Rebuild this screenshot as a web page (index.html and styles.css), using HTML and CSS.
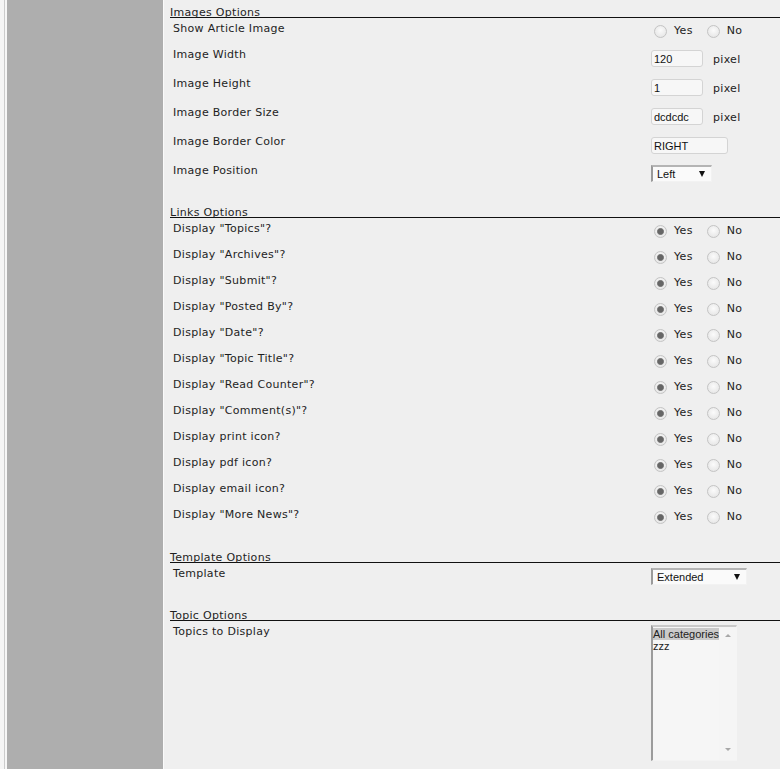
FILE: index.html
```html
<!DOCTYPE html>
<html>
<head>
<meta charset="utf-8">
<title>Options</title>
<link rel="stylesheet" href="styles.css">
</head>
<body>
<div class="shell">
  <div class="gutter"></div>
  <div class="sidebar"></div>
  <main class="content">

    <section class="section section-first">
      <h2 class="section-title">Images Options</h2>
      <div class="row row-radio">
        <div class="label">Show Article Image</div>
        <div class="control">
          <label class="opt"><input type="radio" class="radio" name="img"><span>Yes</span></label>
          <label class="opt"><input type="radio" class="radio" name="img"><span>No</span></label>
        </div>
      </div>
      <div class="row row-input">
        <div class="label">Image Width</div>
        <div class="control"><input class="text text-short" value="120"><span class="unit">pixel</span></div>
      </div>
      <div class="row row-input">
        <div class="label">Image Height</div>
        <div class="control"><input class="text text-short" value="1"><span class="unit">pixel</span></div>
      </div>
      <div class="row row-input">
        <div class="label">Image Border Size</div>
        <div class="control"><input class="text text-short" value="dcdcdc"><span class="unit">pixel</span></div>
      </div>
      <div class="row row-input">
        <div class="label">Image Border Color</div>
        <div class="control"><input class="text text-long" value="RIGHT"></div>
      </div>
      <div class="row row-select">
        <div class="label">Image Position</div>
        <div class="control"><div class="select select-small"><span>Left</span><span class="arrow"></span></div></div>
      </div>
    </section>

    <section class="section section-links">
      <h2 class="section-title">Links Options</h2>
      <div class="row row-radio"><div class="label">Display "Topics"?</div><div class="control"><label class="opt"><input type="radio" class="radio" name="l1" checked><span>Yes</span></label><label class="opt"><input type="radio" class="radio" name="l1"><span>No</span></label></div></div>
      <div class="row row-radio"><div class="label">Display "Archives"?</div><div class="control"><label class="opt"><input type="radio" class="radio" name="l2" checked><span>Yes</span></label><label class="opt"><input type="radio" class="radio" name="l2"><span>No</span></label></div></div>
      <div class="row row-radio"><div class="label">Display "Submit"?</div><div class="control"><label class="opt"><input type="radio" class="radio" name="l3" checked><span>Yes</span></label><label class="opt"><input type="radio" class="radio" name="l3"><span>No</span></label></div></div>
      <div class="row row-radio"><div class="label">Display "Posted By"?</div><div class="control"><label class="opt"><input type="radio" class="radio" name="l4" checked><span>Yes</span></label><label class="opt"><input type="radio" class="radio" name="l4"><span>No</span></label></div></div>
      <div class="row row-radio"><div class="label">Display "Date"?</div><div class="control"><label class="opt"><input type="radio" class="radio" name="l5" checked><span>Yes</span></label><label class="opt"><input type="radio" class="radio" name="l5"><span>No</span></label></div></div>
      <div class="row row-radio"><div class="label">Display "Topic Title"?</div><div class="control"><label class="opt"><input type="radio" class="radio" name="l6" checked><span>Yes</span></label><label class="opt"><input type="radio" class="radio" name="l6"><span>No</span></label></div></div>
      <div class="row row-radio"><div class="label">Display "Read Counter"?</div><div class="control"><label class="opt"><input type="radio" class="radio" name="l7" checked><span>Yes</span></label><label class="opt"><input type="radio" class="radio" name="l7"><span>No</span></label></div></div>
      <div class="row row-radio"><div class="label">Display "Comment(s)"?</div><div class="control"><label class="opt"><input type="radio" class="radio" name="l8" checked><span>Yes</span></label><label class="opt"><input type="radio" class="radio" name="l8"><span>No</span></label></div></div>
      <div class="row row-radio"><div class="label">Display print icon?</div><div class="control"><label class="opt"><input type="radio" class="radio" name="l9" checked><span>Yes</span></label><label class="opt"><input type="radio" class="radio" name="l9"><span>No</span></label></div></div>
      <div class="row row-radio"><div class="label">Display pdf icon?</div><div class="control"><label class="opt"><input type="radio" class="radio" name="l10" checked><span>Yes</span></label><label class="opt"><input type="radio" class="radio" name="l10"><span>No</span></label></div></div>
      <div class="row row-radio"><div class="label">Display email icon?</div><div class="control"><label class="opt"><input type="radio" class="radio" name="l11" checked><span>Yes</span></label><label class="opt"><input type="radio" class="radio" name="l11"><span>No</span></label></div></div>
      <div class="row row-radio"><div class="label">Display "More News"?</div><div class="control"><label class="opt"><input type="radio" class="radio" name="l12" checked><span>Yes</span></label><label class="opt"><input type="radio" class="radio" name="l12"><span>No</span></label></div></div>
    </section>

    <section class="section section-template">
      <h2 class="section-title">Template Options</h2>
      <div class="row row-select">
        <div class="label">Template</div>
        <div class="control"><div class="select select-wide"><span>Extended</span><span class="arrow"></span></div></div>
      </div>
    </section>

    <section class="section">
      <h2 class="section-title">Topic Options</h2>
      <div class="row row-list">
        <div class="label">Topics to Display</div>
        <div class="control">
          <div class="listbox">
            <ul class="options">
              <li class="option selected">All categories</li>
              <li class="option">zzz</li>
            </ul>
            <div class="scrollbar"><span class="sb-up"></span><span class="sb-down"></span></div>
          </div>
        </div>
      </div>
    </section>

  </main>
</div>
</body>
</html>
```

FILE: styles.css
```css
html, body {
  margin: 0;
  padding: 0;
  background: #efefef;
}

.shell {
  display: flex;
  min-height: 769px;
  font-family: "DejaVu Sans", Verdana, sans-serif;
  font-size: 11px;
  letter-spacing: 0.3px;
  color: #1e1e1e;
}

.gutter {
  width: 4px;
  background: #f5f5f5;
  border-right: 1px solid #cbcbcb;
  flex: none;
}

.sidebar {
  width: 156px;
  flex: none;
  background: #aeaeae;
  border-left: 2px solid #f6f6f6;
  border-right: 1px solid #fafafa;
}

.content {
  flex: 1;
  background: #efefef;
  padding: 6px 0 0 6px;
}

.section {
  margin-top: 20px;
}

.section-first {
  margin-top: 0;
}

.section-template {
  margin-top: 21px;
}

.section-title {
  margin: 0;
  padding-top: 2px;
  font-size: 11px;
  font-weight: normal;
  line-height: 9px;
  border-bottom: 1px solid #111;
  color: #1e1e1e;
}

.row {
  display: flex;
  align-items: flex-start;
}

.label {
  width: 478px;
  padding-left: 3px;
  padding-top: 4px;
  line-height: 14px;
  flex: none;
}

.control {
  display: flex;
  align-items: center;
}

.row-radio { height: 26px; }
.row-radio .control { padding-top: 6px; }

.row-input { height: 29px; }
.row-input .control { padding-top: 6px; }

.row-select { height: 26px; }
.row-select .control { padding-top: 5px; }

.row-list .control { padding-top: 4px; }

.opt {
  display: flex;
  align-items: center;
  margin-right: 11px;
  line-height: 14px;
  color: #222;
}

.radio {
  -webkit-appearance: none;
  appearance: none;
  width: 13px;
  height: 13px;
  margin: 0 7px 0 3px;
  border-radius: 50%;
  border: 1px solid #c4c4c4;
  background: radial-gradient(circle at 50% 40%, #fbfbfb 0%, #e9e9e9 70%, #dedede 100%);
  box-sizing: border-box;
}

.radio:checked {
  background:
    radial-gradient(circle, #666 0, #666 2.6px, #929292 3.3px, transparent 3.8px),
    radial-gradient(circle at 50% 40%, #fbfbfb 0%, #e9e9e9 70%, #dedede 100%);
}

.text {
  box-sizing: border-box;
  height: 17px;
  margin: 0;
  padding: 0 2px;
  border: 1px solid #d4d4d4;
  border-radius: 3px;
  background: #f7f7f7;
  font-family: "Liberation Sans", Arial, sans-serif;
  font-size: 11px;
  letter-spacing: 0;
  color: #111;
  outline: none;
}

.text-short { width: 52px; }
.text-long { width: 77px; }

.unit {
  margin-left: 10px;
  color: #222;
  line-height: 14px;
  position: relative;
  top: 1px;
}

.select {
  box-sizing: border-box;
  height: 17px;
  display: flex;
  align-items: center;
  justify-content: space-between;
  border-left: 2px solid #9a9a9a;
  border-top: 2px solid #b4b4b4;
  border-right: 1px solid #f2f2f2;
  border-bottom: 1px solid #f2f2f2;
  background: #fafafa;
  font-family: "Liberation Sans", Arial, sans-serif;
  font-size: 11px;
  letter-spacing: 0;
  color: #111;
  padding-left: 4px;
  padding-right: 6px;
}

.select-small { width: 61px; }
.select-wide { width: 96px; }

.arrow {
  width: 0;
  height: 0;
  border-left: 3px solid transparent;
  border-right: 3px solid transparent;
  border-top: 6px solid #111;
}

.listbox {
  box-sizing: border-box;
  width: 86px;
  height: 136px;
  display: flex;
  border-left: 2px solid #9c9c9c;
  border-top: 2px solid #c9c9c9;
  border-right: 1px solid #f3f3f3;
  border-bottom: 1px solid #f3f3f3;
  background: #f6f6f6;
}

.options {
  list-style: none;
  margin: 0;
  padding: 1px 0 0 0;
  flex: 1;
  font-family: "Liberation Sans", Arial, sans-serif;
  font-size: 11px;
  letter-spacing: 0;
  line-height: 12px;
  color: #222;
}

.option {
  white-space: nowrap;
}

.option.selected {
  background: #cacaca;
}

.scrollbar {
  width: 18px;
  flex: none;
  display: flex;
  flex-direction: column;
  justify-content: space-between;
  align-items: center;
  padding: 7px 0 9px;
  box-sizing: border-box;
  background: #f5f5f5;
}

.sb-up {
  width: 0;
  height: 0;
  border-left: 3px solid transparent;
  border-right: 3px solid transparent;
  border-bottom: 3px solid #a8a8a8;
}

.sb-down {
  width: 0;
  height: 0;
  border-left: 3px solid transparent;
  border-right: 3px solid transparent;
  border-top: 3px solid #a8a8a8;
}
```
